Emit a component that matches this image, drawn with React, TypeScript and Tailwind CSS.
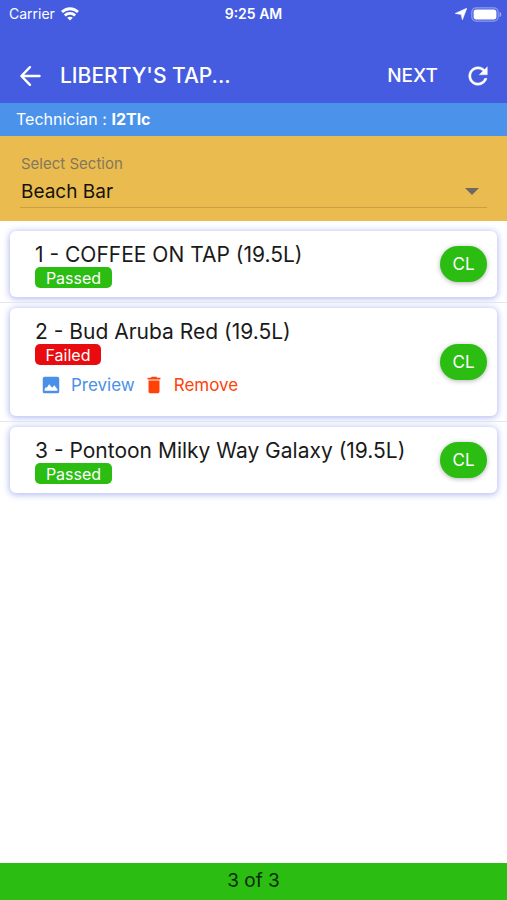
import React from "react";

type Keg = { id: number; name: string; status: "Passed" | "Failed" };

const kegs: Keg[] = [
  { id: 1, name: "COFFEE ON TAP (19.5L)", status: "Passed" },
  { id: 2, name: "Bud Aruba Red (19.5L)", status: "Failed" },
  { id: 3, name: "Pontoon Milky Way Galaxy (19.5L)", status: "Passed" },
];

function StatusBar() {
  return (
    <div className="grid h-7 grid-cols-3 items-center px-[9px] text-sm">
      <div className="flex items-center gap-[6px]">
        <span>Carrier</span>
        <svg viewBox="0 0 18 14" className="h-[14px] w-[18px]" fill="none" stroke="currentColor" strokeWidth="2.8" aria-hidden="true">
          <path d="M1 5.1C5.5.6 12.5.6 17 5.1" />
          <path d="M3.800 8.400c2.9-2.7 7.500-2.7 10.400 0" />
          <path d="M9 13.6 6.2 10.8c1.6-1.5 4-1.5 5.6 0z" fill="currentColor" stroke="none" />
        </svg>
      </div>
      <div className="text-center font-semibold">9:25 AM</div>
      <div className="-mr-1 flex items-center justify-end gap-1">
        <svg viewBox="0 0 12 12" className="size-3" fill="currentColor" aria-hidden="true">
          <path d="M11.800.2 7.400 11.800 6.200 6.400.2 5.400z" stroke="currentColor" strokeWidth="0.6" />
        </svg>
        <svg viewBox="0 0 31 15" className="h-[15px] w-[31px]" aria-hidden="true">
          <rect x="0.8" y="0.8" width="26.4" height="13.4" rx="4.4" fill="none" stroke="#fff" strokeOpacity="0.4" strokeWidth="1.2" />
          <rect x="2.6" y="2.6" width="22.8" height="9.8" rx="2.6" fill="#fff" />
          <path d="M28.6 5c2.2.6 2.2 4.4 0 5z" fill="#fff" fillOpacity="0.5" />
        </svg>
      </div>
    </div>
  );
}

function Toolbar() {
  return (
    <div className="flex h-[54px] items-center pr-[15px] pl-[18px]">
      <button type="button" aria-label="Back" className="flex size-6 items-center justify-center">
        <svg viewBox="0 0 24 24" className="size-6" fill="none" stroke="currentColor" strokeWidth="2.4" strokeLinecap="round" strokeLinejoin="round" aria-hidden="true">
          <path d="M21.500 12H3.6M12 3.2 3.4 12l8.600 8.800" />
        </svg>
      </button>
      <h1 className="ml-[18px] flex-1 truncate text-[21px] leading-7 font-medium">LIBERTY&apos;S TAP...</h1>
      <button type="button" className="text-[19px] leading-7 font-medium">NEXT</button>
      <button type="button" aria-label="Refresh" className="ml-[26px] flex size-7 items-center justify-center">
        <svg viewBox="0 0 24 24" className="size-7" fill="currentColor" stroke="currentColor" strokeWidth="0.3" aria-hidden="true">
          <path d="M17.650 6.350C16.200 4.900 14.210 4 12 4c-4.420 0-7.990 3.580-7.990 8s3.570 8 7.990 8c3.730 0 6.840-2.550 7.730-6h-2.080c-.82 2.330-3.040 4-5.650 4-3.310 0-6-2.690-6-6s2.690-6 6-6c1.660 0 3.140.69 4.220 1.780L13 11h7V4z" />
        </svg>
      </button>
    </div>
  );
}

function SectionSelect() {
  return (
    <div className="bg-[#eabc50] px-5 pt-5 pb-[13px]">
      <label htmlFor="section" className="block pl-px text-[15px] leading-4 text-[#857759]">
        Select Section
      </label>
      <div className="relative">
        <select id="section" defaultValue="Beach Bar" className="h-9 w-full appearance-none border-b border-[#cba045] bg-transparent pt-[6px] pl-px text-[19px] text-[#15130c] outline-none">
          <option>Beach Bar</option>
        </select>
        <svg viewBox="0 0 14 7" className="pointer-events-none absolute top-4 right-2 h-[7px] w-[14px]" fill="#6f6a60" aria-hidden="true">
          <path d="M0 0h14L7 7z" />
        </svg>
      </div>
    </div>
  );
}

function KegRow({ keg }: { keg: Keg }) {
  const failed = keg.status === "Failed";
  return (
    <li className="border-t border-[#e6e6ee] px-[10px] py-[5px] first:border-t-0 first:pt-[10px]">
      <article className="flex items-center rounded-md bg-white pr-[10px] pl-[25px] shadow-[0_1px_6px_1px_rgba(69,92,224,0.4)]">
        <div className={failed ? "flex-1 pt-3 pb-[19px]" : "flex-1 pt-3 pb-[9px]"}>
          <h2 className="text-[21px] leading-6 text-[#1a1a1a]">
            {keg.id} - {keg.name}
          </h2>
          <div className={failed ? "flex h-[21px] w-[66px] items-center justify-center rounded-[5px] bg-[#e80c10] text-base text-white" : "flex h-[21px] w-[77px] items-center justify-center rounded-[5px] bg-[#2bbd12] text-base text-white"}>
            {keg.status}
          </div>
          {failed && (
            <div className="mt-2 flex items-center gap-2 pl-[5px] text-[17px] leading-6">
              <button type="button" className="flex items-center gap-[9px] text-[#4a90e8]">
                <svg viewBox="0 0 24 24" className="size-[22px]" fill="currentColor" aria-hidden="true">
                  <path fillRule="evenodd" d="M5 3h14a2 2 0 0 1 2 2v14a2 2 0 0 1-2 2H5a2 2 0 0 1-2-2V5a2 2 0 0 1 2-2zM5 18.200h14v-1.700l-3.400-4.200-2.300 2.600-3.300-3.600-2.600 3.600-.9-.6L5 16.500z" />
                </svg>
                Preview
              </button>
              <button type="button" className="flex items-center gap-[9px] text-[#ff4208]">
                <svg viewBox="0 0 24 24" className="size-[22px]" fill="currentColor" aria-hidden="true">
                  <path d="M6 19c0 1.100.9 2 2 2h8c1.100 0 2-.9 2-2V7H6zM19 4h-3.500l-1-1h-5l-1 1H5v2h14z" />
                </svg>
                Remove
              </button>
            </div>
          )}
        </div>
        <button type="button" className="flex h-9 w-[47px] items-center justify-center rounded-full bg-[#2bbd12] text-[17px] leading-6 text-white shadow-[0_1px_5px_rgba(0,0,0,0.3)]">
          CL
        </button>
      </article>
    </li>
  );
}

export default function App() {
  return (
    <div className="flex min-h-screen flex-col bg-white font-['Inter','Liberation_Sans',sans-serif]">
      <header className="bg-[#455ce0] text-white">
        <StatusBar />
        <div className="pt-[21px]">
          <Toolbar />
        </div>
      </header>
      <div className="bg-[#4a92ea] px-4 pt-1 pb-[5px] text-base text-white">
        Technician : <strong className="font-bold">I2Tlc</strong>
      </div>
      <SectionSelect />
      <main className="flex-1">
        <ul>
          {kegs.map((keg) => (
            <KegRow key={keg.id} keg={keg} />
          ))}
        </ul>
      </main>
      <footer className="bg-[#2bbd12] pt-1 pb-[5px] text-center text-[19px] leading-7 text-[#0c2a08]">3 of 3</footer>
    </div>
  );
}
